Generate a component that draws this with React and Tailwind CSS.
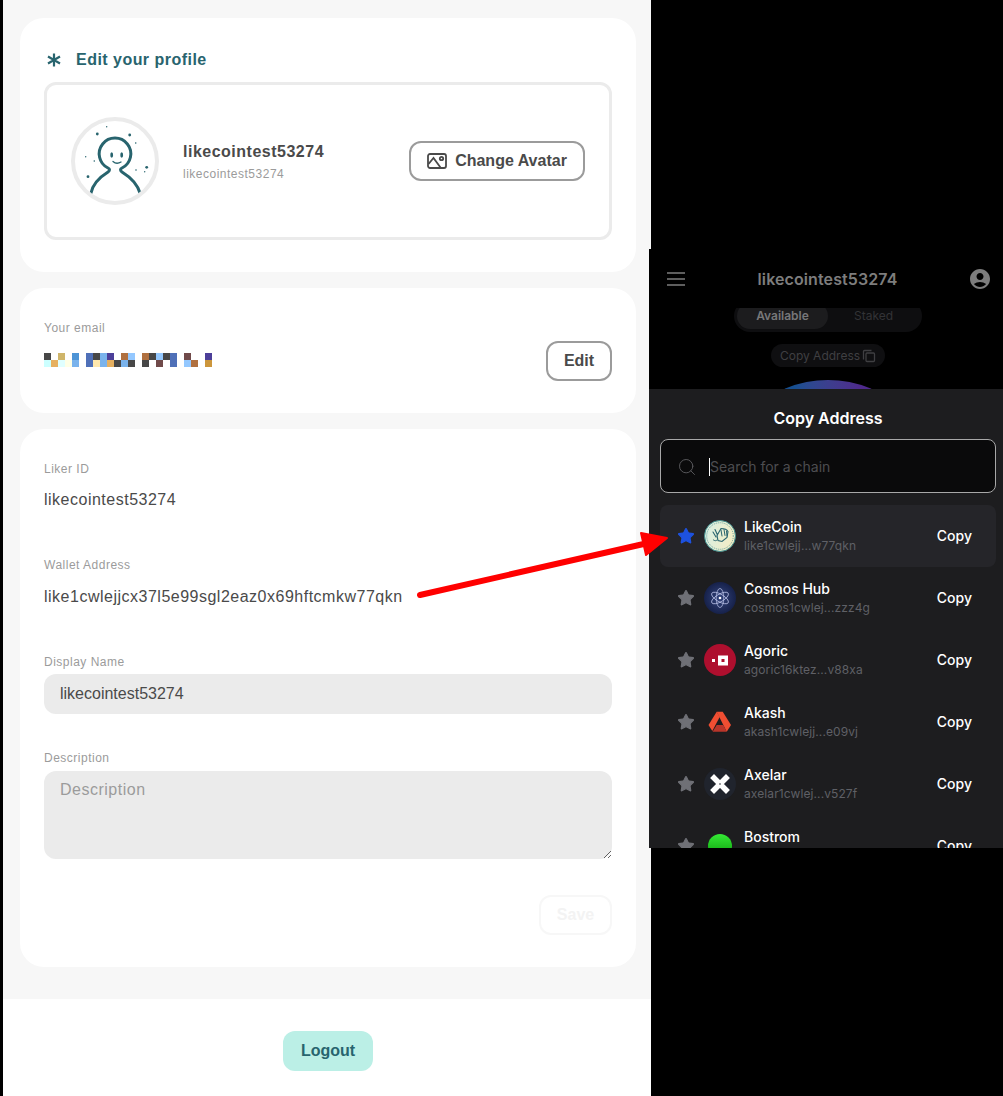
import React from 'react';
import { Search, Star } from 'lucide-react';
import { MdAccountCircle } from 'react-icons/md';

const K = 'bg-[#474747]';
const W = 'bg-white';
const BL = 'bg-[#4f70b8]';
const LB = 'bg-[#7ab3ec]';
const SK = 'bg-[#94c8ff]';
const BR = 'bg-[#b07040]';
const OR = 'bg-[#e6b060]';
const PU = 'bg-[#4c3f99]';
const MA = 'bg-[#704a4a]';

// pixelated email, top row then bottom row
const mosaicTop = [K, W, 'bg-[#cfb56a]', W, 'bg-[#4d94d6]', W, BL, K, LB, PU, W, BR, SK, W, BR, K, SK, K, BL, W, MA, W, W, PU];
const mosaicBottom = ['bg-[#ccffff]', OR, 'bg-[#e0ffff]', 'bg-[#ffffe6]', LB, W, BL, 'bg-[#ffe8ad]', LB, OR, K, LB, K, W, K, W, MA, W, BL, W, SK, BR, W, 'bg-[#cc963c]'];

const labelClass = 'text-xs leading-4 text-[#9b9b9b] tracking-[0.5px]';
const valueClass = 'text-base leading-6 text-[#4a4a4a] tracking-[0.5px]';
const outlineBtn = 'h-10 flex items-center justify-center rounded-xl border-2 border-[#9b9b9b] bg-white text-base font-bold text-[#4a4a4a]';

const Avatar = () => (
  <div className="w-[88px] h-[88px] rounded-full border-4 border-[#ebebeb] bg-white shrink-0 overflow-hidden">
    <svg viewBox="4 4 80 80" className="w-20 h-20 block" fill="none">
      <path
        d="M20 76C22 66 29 60 37 55C39 53.500 39 52 37 51A15.800 15.800 0 1 1 51 51C49 52 49 53.500 51 55C59 60 66 66 69 76"
        stroke="#28646e"
        strokeWidth="3"
        strokeLinecap="round"
      />
      <ellipse cx="40.700" cy="38" rx="1.400" ry="2.800" fill="#28646e" />
      <ellipse cx="50.700" cy="38" rx="1.400" ry="2.800" fill="#28646e" />
      <path d="M42 44.500C44 46.300 47.500 46.500 50 45" stroke="#28646e" strokeWidth="1.300" strokeLinecap="round" />
      <g fill="#28646e">
        <circle cx="26.300" cy="17" r="1.400" />
        <circle cx="35.700" cy="9.700" r="0.700" />
        <circle cx="58.700" cy="18" r="1.400" />
        <circle cx="64.700" cy="26" r="0.800" />
        <circle cx="14.700" cy="39.700" r="0.700" />
        <circle cx="23.300" cy="44" r="0.800" />
        <circle cx="17" cy="59.700" r="1.400" />
        <circle cx="65" cy="53" r="0.800" />
        <circle cx="75.700" cy="50.300" r="1.400" />
        <circle cx="73.700" cy="54.700" r="0.700" />
      </g>
    </svg>
  </div>
);

const LikeCoinLogo = () => (
  <svg viewBox="0 0 32 32" className="w-8 h-8">
    <defs>
      <linearGradient id="likeBg" x1="0" y1="0" x2="1" y2="0.300">
        <stop offset="0" stopColor="#d6efe6" />
        <stop offset="1" stopColor="#f2edc6" />
      </linearGradient>
    </defs>
    <circle cx="16" cy="16" r="15.500" fill="url(#likeBg)" stroke="#3f8c8c" strokeWidth="1" />
    <circle cx="16" cy="16" r="13.300" fill="none" stroke="#4a9090" strokeWidth="0.800" strokeDasharray="1 1" />
    <path d="M9 12l3 5M11 9.500l2.500 5.500M17 8.500c3 0 6 1 7 3l-1 6-5 4-4-1-1-5z" fill="none" stroke="#28646e" strokeWidth="1.100" strokeLinecap="round" />
    <path d="M17 10l1 6M20 9.500l1 6M22.500 11l.5 5M9.500 20c1.500 1 2.500 1 3.500 0" fill="none" stroke="#28646e" strokeWidth="1" strokeLinecap="round" />
  </svg>
);

const CosmosLogo = () => (
  <svg viewBox="0 0 32 32" className="w-8 h-8">
    <defs>
      <radialGradient id="cosmosBg">
        <stop offset="0" stopColor="#34457e" />
        <stop offset="1" stopColor="#16214a" />
      </radialGradient>
    </defs>
    <circle cx="16" cy="16" r="16" fill="url(#cosmosBg)" />
    <g fill="none" stroke="#b4bce2" strokeWidth="0.800">
      <ellipse cx="16" cy="16" rx="3.800" ry="9.500" />
      <ellipse cx="16" cy="16" rx="3.800" ry="9.500" transform="rotate(60 16 16)" />
      <ellipse cx="16" cy="16" rx="3.800" ry="9.500" transform="rotate(120 16 16)" />
    </g>
    <circle cx="16" cy="16" r="1.300" fill="#fff" />
  </svg>
);

const AgoricLogo = () => (
  <svg viewBox="0 0 32 32" className="w-8 h-8">
    <circle cx="16" cy="16" r="16" fill="#ae0f2e" />
    <rect x="8" y="15" width="3" height="3" fill="#fff" />
    <rect x="14" y="11.500" width="10" height="10" fill="#fff" />
    <rect x="17.500" y="15" width="3" height="3" fill="#ae0f2e" />
  </svg>
);

const AkashLogo = () => (
  <svg viewBox="0 0 32 32" className="w-8 h-8">
    <path d="M12.700 5.700H18.700L27 19L22.700 25.700Z" fill="#f04e32" />
    <path d="M12.700 5.700L15.700 11L8.300 25L4.500 19Z" fill="#f04e32" />
    <path d="M12.700 19H19.300L22.700 25.700H8.600Z" fill="#b8352a" />
  </svg>
);

const AxelarLogo = () => (
  <svg viewBox="0 0 32 32" className="w-8 h-8">
    <circle cx="16" cy="16" r="16" fill="#20242d" />
    <path d="M10 10l12 12M22 10L10 22" stroke="#fff" strokeWidth="5.500" strokeLinecap="square" />
    <circle cx="16" cy="16" r="0.800" fill="#20242d" />
  </svg>
);

const BostromLogo = () => (
  <svg viewBox="0 0 32 32" className="w-8 h-8">
    <defs>
      <linearGradient id="bostromBg" x1="0" y1="0" x2="0" y2="1">
        <stop offset="0" stopColor="#35ea35" />
        <stop offset="1" stopColor="#0a9a0a" />
      </linearGradient>
    </defs>
    <circle cx="16" cy="16" r="12" fill="url(#bostromBg)" />
  </svg>
);

const chains = [
  { name: 'LikeCoin', address: 'like1cwlejj...w77qkn', logo: LikeCoinLogo, active: true },
  { name: 'Cosmos Hub', address: 'cosmos1cwlej...zzz4g', logo: CosmosLogo },
  { name: 'Agoric', address: 'agoric16ktez...v88xa', logo: AgoricLogo },
  { name: 'Akash', address: 'akash1cwlejj...e09vj', logo: AkashLogo },
  { name: 'Axelar', address: 'axelar1cwlej...v527f', logo: AxelarLogo },
  { name: 'Bostrom', address: '\u00a0', logo: BostromLogo },
];

const ChainRow = ({ chain }) => {
  const Logo = chain.logo;
  return (
    <div className={`h-[62px] shrink-0 flex items-center pl-[17px] pr-6 rounded-lg ${chain.active ? 'bg-[#252529]' : ''}`}>
      <Star
        className={`w-[18px] h-[18px] shrink-0 ${chain.active ? 'text-[#1d52e0]' : 'text-[#6f7076]'}`}
        fill="currentColor"
        strokeWidth={1.5}
      />
      <div className="ml-[9px] shrink-0 w-8 h-8">
        <Logo />
      </div>
      <div className="ml-2 flex-1 pb-0.5">
        <div className="text-sm leading-5 font-medium text-white">{chain.name}</div>
        <div className="mt-px text-xs leading-4 text-[#5f6066] tracking-[0.1px]">{chain.address}</div>
      </div>
      <span className="text-sm font-medium text-white">Copy</span>
    </div>
  );
};

const ProfilePanel = () => (
  <div className="w-[648px] ml-[3px] shrink-0 flex flex-col font-['Liberation_Sans',Arial,sans-serif]">
    <main className="flex-1 bg-[#f7f7f7] pt-[18px] pl-[17px] pr-[15px] flex flex-col gap-4">
      <section className="bg-white rounded-3xl px-6 pt-[26px] pb-8">
        <div className="h-[32px] mb-1.5 flex items-center">
          <svg viewBox="0 0 16 16" className="w-4 h-4 ml-[2px]" stroke="#28646e" strokeWidth="2.200">
            <path d="M8 1.500v13M2 4.500l12 7M14 4.500l-12 7" />
          </svg>
          <h2 className="ml-3.5 text-base font-bold text-[#28646e] tracking-[0.47px]">Edit your profile</h2>
        </div>
        <div className="h-[158px] rounded-xl border-[3px] border-[#ebebeb] pl-6 pr-6 flex items-center">
          <Avatar />
          <div className="ml-6 flex-1">
            <div className="text-base leading-6 font-bold text-[#4a4a4a] tracking-[0.5px]">likecointest53274</div>
            <div className="text-xs leading-4 mt-0.5 text-[#9b9b9b] tracking-[0.5px]">likecointest53274</div>
          </div>
          <button className={`${outlineBtn} w-[176px] gap-2`}>
            <svg viewBox="0 0 20 16" className="w-5 h-4" fill="none" stroke="#4a4a4a" strokeWidth="1.800">
              <rect x="1" y="1" width="18" height="14" rx="2" />
              <path d="M1.500 11l5-6 7 9.500" />
              <circle cx="14.500" cy="5.500" r="1.700" />
            </svg>
            <span>Change Avatar</span>
          </button>
        </div>
      </section>

      <section className="bg-white rounded-3xl px-6 pt-8 pb-8">
        <div className={labelClass}>Your email</div>
        <div className="mt-[5px] flex items-start justify-between">
          <div className="mt-3 grid grid-cols-[repeat(24,7px)] auto-rows-[7px]">
            {mosaicTop.concat(mosaicBottom).map((cell, i) => (
              <div key={i} className={cell} />
            ))}
          </div>
          <button className={`${outlineBtn} w-[66px]`}>Edit</button>
        </div>
      </section>

      <section className="bg-white rounded-3xl px-6 pt-8 pb-8">
        <div className={labelClass}>Liker ID</div>
        <div className={`mt-[11px] ${valueClass}`}>likecointest53274</div>

        <div className={`${labelClass} mt-[45px]`}>Wallet Address</div>
        <div className={`mt-3 ${valueClass}`}>like1cwlejjcx37l5e99sgl2eaz0x69hftcmkw77qkn</div>

        <div className={`${labelClass} mt-[45px]`}>Display Name</div>
        <input
          readOnly
          value="likecointest53274"
          className="mt-1 block w-full h-10 rounded-xl bg-[#ebebeb] px-4 text-base text-[#4a4a4a] outline-none"
        />

        <div className={`${labelClass} mt-9`}>Description</div>
        <textarea
          readOnly
          placeholder="Description"
          className="mt-[5px] block w-full h-[88px] rounded-xl bg-[#ebebeb] px-4 py-[7px] text-base tracking-[0.5px] text-[#4a4a4a] placeholder:text-[#9b9b9b] outline-none"
        />

        <div className="mt-9 flex justify-end">
          <button className="w-[73px] h-10 rounded-xl border-2 border-[#f7f7f7] text-base font-bold text-[#f3f3f3]">Save</button>
        </div>
      </section>
      <div className="h-4" />
    </main>
    <footer className="h-[97px] bg-white flex justify-center pt-8 pl-0.5">
      <button className="w-[90px] h-10 rounded-xl bg-[#bbefe6] text-base font-bold text-[#28646e]">Logout</button>
    </footer>
  </div>
);

const WalletPanel = () => (
  <div className="relative -ml-0.5 mt-[249px] w-[354px] h-[599px] bg-black flex flex-col overflow-hidden font-['Inter',sans-serif]">
    <div className="h-[140px] shrink-0 overflow-hidden flex flex-col items-center">
      <header className="relative z-10 w-full h-[59px] shrink-0 bg-black flex items-center justify-between pl-[18px] pr-[11px]">
        <svg viewBox="0 0 18 14" className="w-[18px] h-[14px]" stroke="#7d7d7d" strokeWidth="1.500">
          <path d="M0 1h18M0 7h18M0 13h18" />
        </svg>
        <span className="ml-0.5 text-base font-semibold text-[#7d7d7d] tracking-[0.1px]">likecointest53274</span>
        <MdAccountCircle className="w-6 h-6 text-[#7d7d7d]" />
      </header>
      <div className="-mt-2 ml-1 w-[188px] h-8 shrink-0 rounded-full bg-[#0e0e10] p-[3px] flex">
        <div className="w-[91px] rounded-full bg-[#1c1c1e] flex items-center justify-center text-xs font-semibold text-[#777779]">Available</div>
        <div className="flex-1 flex items-center justify-center text-xs text-[#333336]">Staked</div>
      </div>
      <div className="mt-3 ml-1 w-[114px] h-[23px] shrink-0 rounded-full bg-[#0f0f11] flex items-center justify-center gap-0.5 text-xs text-[#3f3f42]">
        Copy Address
        <svg viewBox="0 0 14 14" className="w-3.5 h-3.5" fill="none" stroke="#3f3f42" strokeWidth="1.300">
          <path d="M1.500 10.500V2.500a1 1 0 0 1 1-1h7" />
          <rect x="4" y="4" width="8.500" height="8.500" rx="1" />
        </svg>
      </div>
      <div className="mt-[13px] ml-1 w-[220px] h-[220px] shrink-0 rounded-full bg-gradient-to-r from-[#174f90] from-[35%] to-[#4e2a8c] to-[65%]" />
    </div>

    <div className="flex-1 min-h-0 bg-[#1d1d1f] pt-[17px] pl-[11px] pr-[7px] flex flex-col overflow-hidden">
      <h3 className="text-center text-base leading-6 font-semibold text-white">Copy Address</h3>
      <div className="mt-[9px] h-[54px] shrink-0 rounded-lg border border-[#a8a8a8] bg-[#0a0a0b] pl-4 pt-px flex items-center">
        <Search className="w-5 h-5 text-[#5d5d60]" strokeWidth={1.1} />
        <span className="ml-3 w-px h-[18px] bg-white" />
        <span className="text-sm text-[#4d4d50]">Search for a chain</span>
      </div>
      <div className="mt-3 flex flex-col">
        {chains.map((chain) => (
          <ChainRow key={chain.name} chain={chain} />
        ))}
      </div>
    </div>
  </div>
);

export default function App() {
  return (
    <div className="relative flex items-start w-[1003px] h-[1096px] bg-black overflow-hidden">
      <div className="self-stretch flex">
        <ProfilePanel />
      </div>
      <WalletPanel />
      {/* red annotation arrow drawn over both screenshots */}
      <svg className="absolute left-0 top-0 w-[1003px] h-[1096px] pointer-events-none" viewBox="0 0 1003 1096">
        <path d="M420 595L648 543" stroke="#ff0000" strokeWidth="6" strokeLinecap="round" />
        <path d="M641 533L667 538L646 555Z" fill="#ff0000" stroke="#ff0000" strokeWidth="2" strokeLinejoin="round" />
      </svg>
    </div>
  );
}
